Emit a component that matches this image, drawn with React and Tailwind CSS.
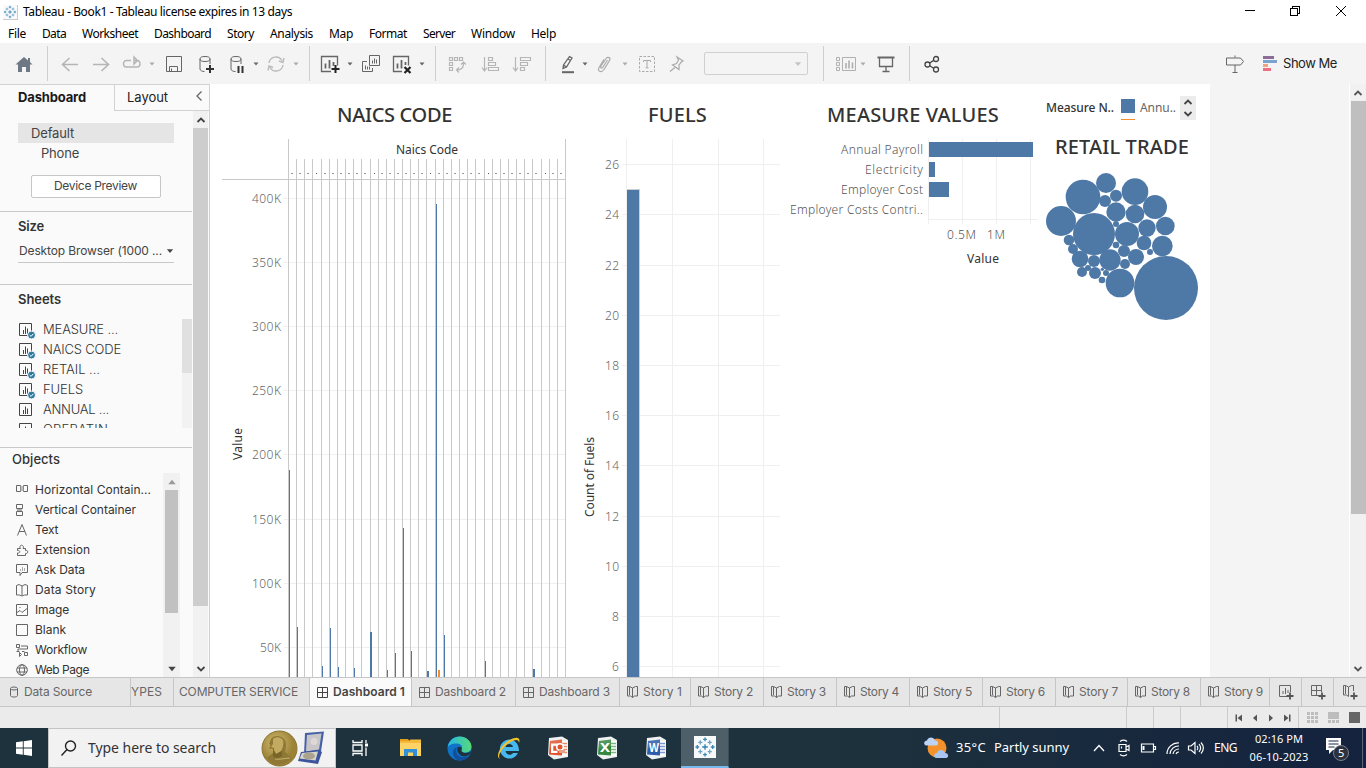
import React, { useLayoutEffect, useRef, useState } from "react";

const UI = "font-['Noto_Sans',sans-serif]";

/* Text run tracked so that it fills a given width. */
function Fit({ w, className = "", children }) {
  const ref = useRef(null);
  const [ls, setLs] = useState(0);
  useLayoutEffect(() => {
    const natural = ref.current.getBoundingClientRect().width;
    setLs((w - natural) / String(children).length);
  }, []);
  return (
    <span ref={ref} className={`inline-block shrink-0 whitespace-nowrap ${className}`} style={{ letterSpacing: ls }}>
      {children}
    </span>
  );
}

function Ico({ w = 20, h = 20, className = "", children, ...rest }) {
  return (
    <svg width={w} height={h} viewBox={`0 0 ${w} ${h}`} fill="none" stroke="currentColor" className={`shrink-0 ${className}`} {...rest}>
      {children}
    </svg>
  );
}

const Caret = ({ className = "" }) => (
  <Ico w={8} h={8} className={className}><path d="M1.5 2.5h5L4 5.5z" fill="currentColor" stroke="none" /></Ico>
);
const Sep = ({ className = "" }) => <div className={`h-[35px] w-px shrink-0 bg-[#cfcfcf] ${className}`} />;

function TableauMark({ size, className = "" }) {
  const plus = (x, y, r, c, k) => <path key={k} d={`M${x - r} ${y}h${2 * r}M${x} ${y - r}v${2 * r}`} stroke={c} />;
  return (
    <svg width={size} height={size} viewBox="0 0 22 22" className={className} strokeWidth="1.300">
      <rect width="22" height="22" fill="#f7f9fa" />
      {plus(11, 11, 2.8, "#2f7fb0", 0)}
      {[[11, 3.3], [11, 18.7], [3.3, 11], [18.7, 11]].map(([x, y], i) => plus(x, y, 1.9, "#3d87b5", i + 1))}
      {[[6.3, 6.3], [15.7, 6.3], [6.3, 15.7], [15.7, 15.7]].map(([x, y], i) => plus(x, y, 2.1, "#6aa5c8", i + 5))}
    </svg>
  );
}

function TitleBar() {
  return (
    <div className="flex h-6 items-center bg-white pl-[3px] text-black">
      <TableauMark size={15} className="border-r border-b border-[#ccc]" />
      <Fit w={269} className={`ml-[5px] text-xs leading-6 ${UI}`}>Tableau - Book1 - Tableau license expires in 13 days</Fit>
      <Ico w={12} h={12} className="ml-[952px]" shapeRendering="crispEdges"><path d="M1 4.500h10" /></Ico>
      <Ico w={12} h={12} className="ml-[33px]" shapeRendering="crispEdges"><path d="M1.5 2.5h7v7h-7zM3.5 2V.5h7v7H9" /></Ico>
      <Ico w={12} h={12} className="ml-[34px]"><path d="M1 0l10 10M11 0L1 10" /></Ico>
    </div>
  );
}

const MENU = [
  ["File", 18, "ml-2"], ["Data", 24, "ml-4"], ["Worksheet", 56, "ml-4"], ["Dashboard", 57, "ml-4"],
  ["Story", 27, "ml-4"], ["Analysis", 43, "ml-4"], ["Map", 24, "ml-4"], ["Format", 38, "ml-4"],
  ["Server", 32, "ml-4"], ["Window", 44, "ml-4"], ["Help", 25, "ml-4"],
];
function MenuBar() {
  return (
    <div className={`flex h-[19px] bg-white text-xs leading-[19px] text-black ${UI}`}>
      {MENU.map(([t, w, ml]) => <Fit key={t} w={w} className={ml}>{t}</Fit>)}
    </div>
  );
}

const Cylinder = ({ children, className }) => (
  <Ico className={className}>
    <ellipse cx="9" cy="5" rx="5" ry="2.500" /><path d="M4 5v10c0 1.500 2 2.500 4.500 2.500M14 5v5" />{children}
  </Ico>
);

function Toolbar() {
  return (
    <div className="flex h-[41px] items-center bg-[#f4f4f4] text-[#666]">
      <Ico className="ml-3.5"><path d="M10 3L1.500 10.500H4V18h4v-5h4v5h4v-7.500h2.500L16 8V4h-2v2.500z" fill="#6e7784" stroke="none" /></Ico>
      <Sep className="ml-[13px]" />
      <Ico className="ml-3 text-[#b5b5b5]" strokeWidth="1.6"><path d="M18 10.500H2.500M9.500 4L2.500 10.500L9.500 17" /></Ico>
      <Ico className="ml-[11px] text-[#b5b5b5]" strokeWidth="1.6"><path d="M2 10.500h15.500M10.500 4l7 6.500l-7 6.500" /></Ico>
      <Ico className="ml-[11px] text-[#b5b5b5]" strokeWidth="1.4"><path d="M9 6.500H4.500a3 3.200 0 0 0 0 6.500H15a3 3.200 0 0 0 3-3.200C18 7.500 17 6.500 15 6.500h-3M12 3v7l3.500-3.500z" /></Ico>
      <Caret className="ml-1.5 text-[#aaa]" />
      <Ico className="ml-2"><path d="M2.500 2.500h15v15h-15zM5.500 17v-4.500h8V17M7.500 14.500v2.500" /></Ico>
      <Cylinder className="ml-3"><path d="M14 11v8M10 15h8" stroke="#333" strokeWidth="2" /></Cylinder>
      <Cylinder className="ml-[11px]"><path d="M11.500 12v7M15.500 12v7" stroke="#333" strokeWidth="2" /></Cylinder>
      <Caret className="ml-[5px]" />
      <Ico className="ml-1.5 text-[#bbb]" strokeWidth="1.4"><path d="M3 9a7 7 0 0 1 13-2.500M17 11a7 7 0 0 1-13 2.500M18 4l-1 4.500l-4-1.500M2 16.500l1-4.500l4 1.500" /></Ico>
      <Caret className="ml-1.5 text-[#aaa]" />
      <Sep className="ml-[9px]" />
      <Ico className="ml-2.5"><path d="M11 17.500H1.500v-15h16v9" strokeWidth="1.3" /><path d="M5.500 9.500v5M9.500 6v8.500M13.500 8v4" strokeWidth="1.8" /><path d="M15.500 11v8M11.500 15h8" stroke="#222" strokeWidth="2" /></Ico>
      <Caret className="ml-1.5" />
      <Ico className="ml-[7px]"><path d="M8.500 1.500h10v10h-10zM6 7.500H1.500v10h10V14M11.500 6.500v3M13.500 4.500v5M15.500 5.500v4M4.500 11.500v4M6.500 12.500v3M8.500 12.500v3" /></Ico>
      <Ico className="ml-[11px]"><path d="M10 17.500H1.500v-15h15v9" strokeWidth="1.3" /><path d="M5.500 9.500v5M9.500 6v8.500M13.500 8v3" strokeWidth="1.8" /><path d="M12.500 13l6 6M18.500 13l-6 6" stroke="#222" strokeWidth="2.200" /></Ico>
      <Caret className="ml-1.5" />
      <Sep className="ml-[9px]" />
      <Ico className="ml-[11px] text-[#b5b5b5]"><path d="M2.500 3.500h3v3h-3zM7.500 3.500h3v3h-3zM12.500 3.500h3v3h-3zM2.500 8.500h3v3h-3zM2.500 13.500h3v3h-3zM16.500 8v2c0 4-3 6-7 6M14 10.500l2.500-2.500l2.500 2.500M12 13.500L9.500 16l2.500 2.500" strokeWidth="1.2" /></Ico>
      <Ico className="ml-[13px] text-[#b5b5b5]"><path d="M4.500 3v14M2 13.500l2.500 3.500l2.500-3.500M8.500 3.500h4v3h-4zM8.500 8.500h7v3h-7zM8.500 13.500h10v3h-10z" strokeWidth="1.2" /></Ico>
      <Ico className="ml-3 text-[#b5b5b5]"><path d="M3.500 3v14M1 13.500l2.500 3.500l2.500-3.500M8.500 3.500h10v3h-10zM8.500 8.500h7v3h-7zM8.500 13.500h4v3h-4z" strokeWidth="1.2" /></Ico>
      <Sep className="ml-[13px]" />
      <Ico className="ml-3"><path d="M5 14.500l.5-3.500L11.500 2.500l2.500 1.500L8.500 13zM5.500 11l3 2M10 5l2.500 1.500" strokeWidth="1.3" /><path d="M4 18.200h12" strokeWidth="2" /></Ico>
      <Caret className="ml-[3px]" />
      <Ico className="ml-1.5 text-[#aaa]" strokeWidth="1.2"><path d="M12.500 6L8 13c-1 2-3 1-2.200-.8L11 4.500c2-2.500 5-.5 3.500 2L9 15.500c-3 4-7 1.500-5-2L9 5.500" /></Ico>
      <Caret className="ml-1.5 text-[#aaa]" />
      <Ico className="ml-2 text-[#aaa]"><path d="M2.500 2.500h15v15h-15z" strokeDasharray="2.500 1.500" /><path d="M6.500 8V6.500h7V8M10 6.500v7M8.500 13.800h3" /></Ico>
      <Ico className="ml-2.5 text-[#aaa]" strokeWidth="1.2"><path d="M10 3l6 4l-1.500.8l-2.500 3.200v4.500L5.500 11l4-1.500L11.500 6zM8.500 13L3 17.500" /></Ico>
      <div className="ml-[17px] flex h-[23px] w-[104px] shrink-0 items-center justify-end rounded-[2px] border border-[#d0d0d0] pr-[5px] text-[#c4c4c4]"><Caret className="scale-125" /></div>
      <Sep className="ml-[15px]" />
      <Ico className="ml-3 text-[#b0b0b0]"><path d="M.5 3.500h3v3h-3zM.5 8.500h3v3h-3zM.5 13.500h3v3h-3zM6.500 3.500h13v13h-13z" /><path d="M10 9v5.500M13 6.500v8M16.500 8.500v6" strokeWidth="1.6" /></Ico>
      <Caret className="ml-[3px] text-[#aaa]" />
      <Ico className="ml-[9px]"><path d="M1.500 3.500h17" strokeWidth="2" /><path d="M3.500 4v8.500h13V4M10 12.500v5M6.500 17.500h7" strokeWidth="1.3" /></Ico>
      <Sep className="ml-[13px]" />
      <Ico className="ml-3 text-[#444]" strokeWidth="1.3"><circle cx="5.500" cy="10.500" r="2.500" /><circle cx="14" cy="5" r="2.500" /><circle cx="14" cy="15.500" r="2.500" /><path d="M7.700 9l4-2.600M7.700 11.800l4 2.400" /></Ico>
      <Ico className="ml-[283px]"><path d="M10 1.500v2M10 11v8M7.500 18.500h5M1.500 4h14l3 3.500l-3 3.500h-14z" /></Ico>
      <Ico className="ml-4" stroke="none"><path d="M2 2h11v3H2z" fill="#8a6e98" /><path d="M2 6h14v3H2z" fill="#7ba3d0" /><path d="M2 10h5v3H2z" fill="#f0a582" /><path d="M2 14h8v3H2z" fill="#ee6f80" /></Ico>
      <Fit w={54} className="ml-0.5 font-['Inter',sans-serif] text-[13px] text-[#222]">Show Me</Fit>
    </div>
  );
}

const SheetIcon = ({ check }) => (
  <Ico w={18} h={17}>
    <path d="M1.500 1.500h12v12h-12zM5.500 8v4M7.500 4.500v7.500M9.500 6.500v5.500" />
    {check && <g><circle cx="13.500" cy="13" r="4" fill="#2f7a9e" stroke="#fafafa" /><path d="M11.700 13l1.400 1.400l2.200-2.600" stroke="#fff" /></g>}
  </Ico>
);
const SHEETS = [["MEASURE ...", 75, 1], ["NAICS CODE", 78, 1], ["RETAIL ...", 57, 1], ["FUELS", 40, 1], ["ANNUAL ...", 66, 0], ["OPERATIN", 65, 0]];

const BOOK = "M3.500 1.500h-2v9.500h3l2 1.500l2-1.500h3V1.500h-2M6.500 12.500v-9.500l-3-1.500v8.500M6.500 3l3-1.500";
const OPEN_BOOK = "M.5 2.500l2.500-1l3 1.500l3-1.500l2.500 1v9.500h-3l-2.500 1l-2.500-1h-3zM6 3v9.500";
const OBJECTS = [
  ["Horizontal Contain...", 116, <><path d="M.5 2.500h4v6h-4zM7.500 2.500h4v6h-4z" /><path d="M4.500 3h3v5h-3z" fill="#bbb" stroke="none" /></>],
  ["Vertical Container", 101, <><path d="M.5 1.500h6v4h-6zM.5 8.500h6v4h-6z" /><path d="M1 6h5v2H1z" fill="#aaa" stroke="none" /></>],
  ["Text", 23, <path d="M1.500 12.500L6 1.500l4.500 11M3 8.500h6" />],
  ["Extension", 55, <path d="M1.500 5.500h3c-1.500-2 .3-4 2-3c1.500 1 1 2.200.5 3h2.500v2c3-.8 3 3.500 0 3v2h-8v-2.500c3 .5 3-3 0-2.500z" />],
  ["Ask Data", 50, <><path d="M.5 1.500h11v8H6l-2 3v-3H.5z" /><path d="M4.500 6v2M6.500 4v4M8.500 5v3" stroke="#aaa" /></>],
  ["Data Story", 61, <path d={OPEN_BOOK} />],
  ["Image", 34, <path d="M.5 1.500h11v11H.5zM1 9.500l3-2l2 2l5-4M3.500 4.500h1" />],
  ["Blank", 31, <path d="M.5 1.500h11v11H.5z" />],
  ["Workflow", 52, <path d="M.5 1.500h3v3h-3zM5 3h6.500v3H2v2.500M.5 8.500h3M6 8.500h2.500M8.500 9.500h3v3h-3zM3.500 9.500v4l2-2z" />],
  ["Web Page", 54, <><circle cx="6" cy="7" r="5.300" /><ellipse cx="6" cy="7" rx="2.500" ry="5.300" /><path d="M1 5h10M1 9h10" /></>],
];

const Chevron = ({ up, className = "" }) => (
  <Ico w={10} h={8} strokeWidth="1.800" className={className}><path d={up ? "M1.500 6L5 2.500L8.500 6" : "M1.500 2L5 5.500L8.500 2"} /></Ico>
);

function Sidebar() {
  return (
    <div className="flex w-[210px] shrink-0 flex-col border-t border-r border-[#d2d2d2] bg-[#fafafa] font-['Inter',sans-serif] text-[#444]">
      <div className="flex h-[26px] shrink-0">
        <div className="w-[114px] pl-[18px] text-[13px] leading-[25px] font-bold text-[#1a1a1a]"><Fit w={68}>Dashboard</Fit></div>
        <div className="flex flex-1 items-center border-b border-l border-[#d2d2d2] pl-3 text-[13px] leading-[25px] text-[#222]">
          <Fit w={41}>Layout</Fit>
          <Ico w={8} h={12} className="mb-1 ml-[27px] text-[#666]" strokeWidth="1.3"><path d="M6.500 1.500L2 6l4.500 4.500" /></Ico>
        </div>
      </div>
      <div className="flex min-h-0 flex-1">
        <div className="flex w-[193px] shrink-0 flex-col pr-px">
          <div className="h-[101px] shrink-0 border-b border-[#c8c8c8] pt-3">
            <div className="ml-[18px] h-5 w-[156px] bg-[#e5e5e5] pl-[13px] text-[13px] leading-5"><Fit w={43}>Default</Fit></div>
            <div className="h-5 pl-[41px] text-[13px] leading-5"><Fit w={38}>Phone</Fit></div>
            <div className="mt-3 ml-[31px] h-[23px] w-[130px] rounded-[2px] border border-[#c6c6c6] bg-white pl-[22px] text-xs leading-[20px]"><Fit w={83}>Device Preview</Fit></div>
          </div>
          <div className="h-[73px] shrink-0 border-b border-[#c8c8c8] pt-1 pl-[18px]">
            <div className="text-[13px] leading-5 font-semibold text-[#333]"><Fit w={26}>Size</Fit></div>
            <div className="mt-[5px] flex h-[22px] w-[156px] items-center border-b border-[#c8c8c8] pb-[2px] pl-px text-xs"><Fit w={143}>Desktop Browser (1000 ...</Fit><Caret className="ml-1 scale-125" /></div>
          </div>
          <div className="flex h-[163px] shrink-0 flex-col border-b border-[#c8c8c8] pt-1 pl-[18px]">
            <div className="text-[13px] leading-5 font-semibold text-[#333]"><Fit w={43}>Sheets</Fit></div>
            <div className="mt-[10px] flex h-[109px] overflow-hidden">
              <div className="w-[164px]">
                {SHEETS.map(([t, w, c]) => (
                  <div key={t} className="flex h-5 items-center pt-0.5 text-[13px]"><SheetIcon check={c} /><Fit w={w} className="ml-[7px] font-light text-[#333]">{t}</Fit></div>
                ))}
              </div>
              <div className="w-2.5 bg-[#f2f2f2]"><div className="h-[54px] bg-[#e0e0e0]" /></div>
            </div>
          </div>
          <div className="flex min-h-0 flex-1 flex-col pl-3">
            <div className="pt-px text-[13px] leading-5 font-medium text-[#333]"><Fit w={48}>Objects</Fit></div>
            <div className="mt-1 flex min-h-0 flex-1">
              <div className="h-full w-[151px] overflow-hidden pt-[7px] pl-1">
                {OBJECTS.map(([t, w, icon]) => (
                  <div key={t} className="flex h-5 items-center text-xs text-[#333]"><Ico w={13} h={14} className="text-[#666]">{icon}</Ico><Fit w={w} className="ml-1.5">{t}</Fit></div>
                ))}
              </div>
              <div className="flex w-[17px] flex-col items-center justify-between bg-[#f1f1f1]">
                <div className="flex flex-col items-center"><Caret className="mt-[5px] mb-1 scale-150 rotate-180 text-[#999]" /><div className="h-[123px] w-[13px] bg-[#c1c1c1]" /></div>
                <Caret className="mb-1 scale-150 text-[#444]" />
              </div>
            </div>
          </div>
        </div>
        <div className="flex w-[15px] shrink-0 flex-col items-center justify-between bg-[#f1f1f1]">
          <div className="flex flex-col items-center"><Chevron up className="mt-[5px] mb-1" /><div className="h-[478px] w-[15px] bg-[#cdcdcd]" /></div>
          <Chevron className="mb-1" />
        </div>
      </div>
    </div>
  );
}

const Heading = ({ w, className, children }) => (
  <div className={`h-8 text-[20px] leading-8 font-medium text-[#333] ${UI} ${className}`}><Fit w={w}>{children}</Fit></div>
);

const RULES = [76, 84, 92, 100, 109, 117, 125, 133, 141, 149, 158, 166, 174, 182, 190, 198, 206, 214, 223, 231, 239, 247, 255, 263, 272, 280, 288, 296, 304, 312, 320, 329, 337, 345, 353];
const NAICS_TICKS = [[198, "400K"], [262, "350K"], [326, "300K"], [390, "250K"], [454, "200K"], [519, "150K"], [583, "100K"], [647, "50K"]];
const NAICS_BARS = [[289, 470, 1], [297, 627, 1], [322, 666, 1], [330, 628, 1], [338, 667, 1], [354, 668, 1], [370, 632, 2], [387, 670, 1], [395, 653, 1], [403, 528, 1], [411, 651, 1], [427, 671, 2], [436, 204, 1], [438, 670, 2, "#f28e2b"], [444, 635, 1], [485, 661, 1], [533, 669, 2]];

function NaicsChart() {
  return (
    <svg width="360" height="545" viewBox="210 132 360 545" className={`block ${UI}`}>
      <g shapeRendering="crispEdges">
        {NAICS_TICKS.map(([y]) => <rect key={y} x="284" y={y} width="282" height="1" fill="#efefef" />)}
        {RULES.map((x, i) => {
          const top = i === 0 || i === RULES.length - 1 ? 139 : 159;
          return <rect key={x} x={212 + x} y={top} width="1" height={677 - top} fill="#c9c9c9" />;
        })}
        {RULES.slice(0, -1).map((x, i) => <rect key={x} x={212 + x + (i % 7 === 3 ? 4 : 3)} y="173" width={i % 7 === 3 ? 1 : 2} height="1" fill={i % 7 === 3 ? "#555" : "#999"} />)}
        <rect x="222" y="179" width="344" height="1" fill="#c9c9c9" />
        {NAICS_BARS.map(([x, y, w, c]) => <rect key={x} x={x} y={y} width={w} height={677 - y} fill={c || "#4e79a7"} />)}
      </g>
      <text x="396" y="154" fontSize="12" textLength="62" fill="#333">Naics Code</text>
      {NAICS_TICKS.map(([y, t]) => <text key={t} x={t === "50K" ? 260 : 252} y={y + 5} fontSize="12" fontWeight="300" textLength={t === "50K" ? 21 : 29} fill="#666">{t}</text>)}
      <text transform="translate(242 460) rotate(-90)" fontSize="12" textLength="32" fill="#333">Value</text>
    </svg>
  );
}

const FUEL_TICKS = [[164, 26], [214, 24], [265, 22], [315, 20], [365, 18], [415, 16], [465, 14], [516, 12], [566, 10], [616, 8], [666, 6]];
function FuelsChart() {
  return (
    <svg width="210" height="545" viewBox="575 132 210 545" className={`block ${UI}`}>
      <g shapeRendering="crispEdges">
        {FUEL_TICKS.map(([y]) => <rect key={y} x="622" y={y} width="158" height="1" fill="#efefef" />)}
        {[626, 672, 718, 763].map((x) => <rect key={x} x={x} y="139" width="1" height="538" fill="#efefef" />)}
        <rect x="627" y="189" width="13" height="488" fill="#cfcfcf" />
        <rect x="627" y="190" width="12" height="487" fill="#4e79a7" />
      </g>
      {FUEL_TICKS.map(([y, t]) => <text key={t} x={t > 9 ? 605 : 612} y={y + 5} fontSize="12" fontWeight="300" textLength={t > 9 ? 14 : 7} fill="#666">{t}</text>)}
      <text transform="translate(594 517) rotate(-90)" fontSize="12" textLength="80" fill="#333">Count of Fuels</text>
    </svg>
  );
}

function MeasureChart() {
  return (
    <svg width="255" height="145" viewBox="785 132 255 145" className={`block ${UI}`} fontSize="12" fontWeight="300" fill="#555">
      <g shapeRendering="crispEdges">
        {[928, 962, 996, 1030].map((x) => <rect key={x} x={x} y="139" width="1" height="85" fill="#efefef" />)}
        <rect x="929" y="219" width="109" height="1" fill="#efefef" />
        <path d="M929 142h104v15h-104zM929 162h6v15h-6zM929 182h20v15h-20z" fill="#4e79a7" />
      </g>
      <text x="841" y="154" textLength="82">Annual Payroll</text>
      <text x="865" y="174" textLength="58">Electricity</text>
      <text x="841" y="194" textLength="82">Employer Cost</text>
      <text x="790" y="214" textLength="133">Employer Costs Contri..</text>
      <text x="947" y="239" textLength="29">0.5M</text>
      <text x="987" y="239" textLength="18">1M</text>
      <text x="967" y="263" textLength="32" fill="#333" fontWeight="400">Value</text>
    </svg>
  );
}

const BUBBLES = [[909, 339, 52], [978, 297, 30], [1065, 323, 40], [1008, 335, 18], [975, 351, 18], [1125, 369, 36], [1008, 384, 29], [1065, 390, 28], [843, 411, 45], [942, 450, 63], [1008, 420, 9], [1041, 450, 36], [1101, 432, 26], [1156, 426, 28], [867, 468, 16], [1092, 477, 22], [1147, 486, 31], [1008, 483, 10], [879, 495, 15], [1032, 501, 18], [1110, 504, 9], [900, 525, 25], [942, 531, 18], [990, 528, 32], [1068, 519, 24], [1035, 540, 15], [924, 552, 9], [906, 564, 15], [945, 567, 18], [967, 556, 5], [978, 567, 9], [966, 588, 10], [1020, 597, 43], [1158, 612, 96]];

function Canvas() {
  return (
    <div className="flex min-w-0 flex-1 bg-[#f4f4f4]">
      <div className="flex w-[1000px] shrink-0 bg-white">
        <div className="w-[365px] shrink-0 pt-[15px]"><Heading w={115} className="mb-px pl-[127px]">NAICS CODE</Heading><NaicsChart /></div>
        <div className="w-[210px] shrink-0 pt-[15px]"><Heading w={59} className="mb-px pl-[73px]">FUELS</Heading><FuelsChart /></div>
        <div className="w-[255px] shrink-0 pt-[15px]"><Heading w={172} className="mb-px pl-[42px]">MEASURE VALUES</Heading><MeasureChart /></div>
        <div className="w-[170px] shrink-0 pt-3">
          <div className={`flex h-6 items-center pl-1.5 text-xs text-[#666] ${UI}`}>
            <Fit w={68} className="pb-px leading-[23px] font-medium text-[#333]">Measure N..</Fit>
            <div className="ml-[7px] flex h-6 w-3.5 flex-col pt-[3px]"><div className="h-3.5 bg-[#4e79a7]" /><div className="mt-1.5 h-px bg-[#f28e2b]" /></div>
            <Fit w={36} className="ml-[5px] pb-px leading-[23px]">Annu..</Fit>
            <div className="ml-1 flex h-6 w-4 flex-col items-center justify-between bg-[#ececec] py-0.5 text-[#444]"><Chevron up /><Chevron /></div>
          </div>
          <Heading w={134} className="mt-[11px] pl-[15px]">RETAIL TRADE</Heading>
          <svg width="160" height="160" viewBox="786 255 480 480" className="mt-[6px] ml-[2px] block" fill="#4e79a7">
            {BUBBLES.map(([x, y, r]) => <circle key={`${x}-${y}`} cx={x} cy={y} r={r} />)}
          </svg>
        </div>
      </div>
      <div className="flex-1" />
      <div className="flex w-[17px] shrink-0 flex-col items-center justify-between border-l border-white bg-[#f1f1f1] text-[#555]">
        <div className="flex flex-col items-center"><Chevron up className="mt-[5px] mb-1" /><div className="h-[413px] w-[15px] bg-[#bfbfbf]" /></div>
        <Chevron className="mb-1" />
      </div>
    </div>
  );
}

const GRID = "M1.500 1.500h10v10h-10zM6.500 1.500v10M1.500 6.500h10";
const DASH_TABS = [["Dashboard 1", 72, "w-[102px]", 1], ["Dashboard 2", 71, "w-[104px]"], ["Dashboard 3", 71, "w-[104px]"]];
const STORY_TABS = ["w-[71px]", "w-[73px]", "w-[73px]", "w-[73px]", "w-[73px]", "w-[73px]", "w-[72px]", "w-[73px]", "w-[69px]"];
const tab = "flex h-full shrink-0 items-center border-r border-[#c6c6c6]";

function TabStrip() {
  return (
    <div className="flex h-[30px] shrink-0 items-center border-y border-[#c6c6c6] bg-[#e6e6e6] font-['Inter',sans-serif] text-xs text-[#666]">
      <div className={`${tab} w-[131px] pl-[9px]`}><Ico w={10} h={14}><ellipse cx="5" cy="3.500" rx="3.500" ry="1.500" /><path d="M1.500 3.500v7c0 2 7 2 7 0v-7" /></Ico><Fit w={68} className="ml-[5px]">Data Source</Fit></div>
      <div className={`${tab} w-[43px]`}><Fit w={31}>YPES</Fit></div>
      <div className={`${tab} w-[136px] pl-[5px]`}><Fit w={119}>COMPUTER SERVICE</Fit></div>
      {DASH_TABS.map(([t, w, cw, on]) => (
        <div key={t} className={`${tab} ${cw} pl-1.5 ${on ? "bg-[#fafafa] font-semibold text-[#444]" : ""}`}><Ico w={13} h={13}><path d={GRID} /></Ico><Fit w={w} className="ml-[4px]">{t}</Fit></div>
      ))}
      {STORY_TABS.map((cw, i) => (
        <div key={i} className={`${tab} ${cw} pl-1.5`}><Ico w={13} h={14}><path d={BOOK} /></Ico><Fit w={39} className="ml-[4px]">{`Story ${i + 1}`}</Fit></div>
      ))}
      <div className={`${tab} w-8 justify-center`}><Ico w={16} h={16}><path d="M9 12.500H1.500v-11h11V8M5 7v3M7.500 4v6M10 6v3" /><path d="M12 8.500v7M8.500 12h7" stroke="#555" strokeWidth="1.800" /></Ico></div>
      <div className={`${tab} w-8 justify-center`}><Ico w={16} h={16}><path d="M9 11.500H1.500v-10h10V8M6.500 1.500v10M1.500 6.500h10" /><path d="M12 8.500v7M8.500 12h7" stroke="#555" strokeWidth="1.800" /></Ico></div>
      <div className="flex flex-1 justify-center"><Ico w={16} h={16}><path d="M3.500 1.500h-2v9.500h3l2 1.500v-9.500l-3-1.500v8.500M6.500 3l3-1.500h2V7" /><path d="M12 8.500v7M8.500 12h7" stroke="#555" strokeWidth="1.800" /></Ico></div>
    </div>
  );
}

function StatusBar() {
  return (
    <div className="flex h-[21px] shrink-0 items-center justify-end bg-[#ebebeb] text-[#555]">
      {["w-[127px]", "w-[27px]", "w-[27px]", "w-[47px]"].map((c, i) => <div key={i} className={`h-full border-l border-[#cbcbcb] ${c}`} />)}
      <div className="flex h-full w-[71px] items-center gap-[6px] border-l border-[#cbcbcb] pl-1.5">
        <Ico w={10} h={10} fill="currentColor" stroke="none"><path d="M1.500 1.500H3v7H1.500zM8 1.500v7L3.500 5z" /></Ico>
        <Ico w={10} h={10} fill="currentColor" stroke="none"><path d="M7 1.500v7L3 5z" /></Ico>
        <Ico w={10} h={10} fill="currentColor" stroke="none"><path d="M3 1.500v7L7 5z" /></Ico>
        <Ico w={10} h={10} fill="currentColor" stroke="none"><path d="M7 1.500h1.500v7H7zM2 1.500v7L6.500 5z" /></Ico>
      </div>
      <div className="flex h-full w-[68px] items-center gap-[10px] border-l border-[#cbcbcb] pl-2">
        <Ico w={11} h={11} fill="#bdbdbd" stroke="none"><path d="M0 0h3v3H0zM4 0h3v3H4zM8 0h3v3H8zM0 4h3v3H0zM4 4h3v3H4zM8 4h3v3H8zM0 8h3v3H0zM4 8h3v3H4zM8 8h3v3H8z" /></Ico>
        <Ico w={11} h={11} fill="#bdbdbd" stroke="none"><path d="M0 0h11v7H0zM0 8h3v3H0zM4 8h3v3H4zM8 8h3v3H8z" /></Ico>
        <div className="size-[11px] bg-[#666]" />
      </div>
    </div>
  );
}

const P_MARK = <><path d="M5 7.500h6.500v2.300H7.300v5h4.200v2.300H5z" fill="#fff" /><circle cx="14" cy="11" r="3.300" fill="#e1532c" stroke="#fff" strokeWidth="1.600" /><path d="M13 14h6v3h-6z" fill="#e9a188" /></>;
function Office({ a, b, glyph }) {
  return (
    <Ico w={24} h={24} stroke="none">
      <path d="M3 2l13-1.500l6 3.500v17l-14 2.500L2 19z" fill="#eef1f2" />
      <path d="M15 5h6v15h-6z" fill="#fff" /><path d="M16 7.500h5M16 10.500h5M16 13.500h5M16 16.500h5" stroke={b} strokeWidth="1.600" />
      <path d="M4 5l12-1.500v16L3 18.500z" fill={a} /><path d="M4 5l12-1.500v6L4 12z" fill="#fff" opacity=".15" />
      {glyph === "P" ? P_MARK : <text x="5" y="16" fontSize="12" fontWeight="700" fill="#fff" textLength="10" lengthAdjust="spacingAndGlyphs" className={UI}>{glyph}</text>}
    </Ico>
  );
}

function Taskbar() {
  return (
    <div className={`flex h-10 shrink-0 items-center bg-linear-to-r from-[#1e323d] from-60% to-[#14223e] text-white ${UI}`}>
      <div className="flex w-12 justify-center"><Ico w={16} h={16} fill="#fff" stroke="none"><path d="M0 2.300L6.800 1.300V7.500H0zM7.700 1.200L16 0v7.500H7.700zM0 8.400h6.800v6.300L0 13.700zM7.700 8.400H16V16l-8.300-1.200z" /></Ico></div>
      <div className="flex h-full w-72 shrink-0 items-center border border-[#c5c5c5] bg-[#f2f2f2] pl-[11px] text-[#333]">
        <Ico w={18} h={18} stroke="#222" strokeWidth="1.400"><circle cx="10.500" cy="7" r="5" /><path d="M7 10.500L1.500 16.500" /></Ico>
        <Fit w={128} className="ml-[10px] text-sm leading-5">Type here to search</Fit>
        <Ico w={37} h={37} className="ml-[45px]" stroke="none">
          <defs><radialGradient id="gold" cx=".4" cy=".35"><stop stopColor="#d2bd70" /><stop offset="1" stopColor="#9b8237" /></radialGradient></defs>
          <circle cx="18.500" cy="18.500" r="17.500" fill="url(#gold)" stroke="#8c7532" />
          <path d="M10 9c2-4 10-4 13 0c3 3 2 9 1 13l7 6c-5 8-20 9-25 0l6-5v-4l-4-.5l1.500-3.500l-1.500-1z" fill="#8f7836" />
          <path d="M12 9c3-3 8-2 10 1c1 3 0 8-2 11l-5 3l-2-2v-4l-3-1l2-3z" fill="#c2ab60" /><path d="M12 18l3 6l6-3v5l-6 3l-3-3z" fill="#7a6529" /><path d="M14 29c5 1 10-1 15-1" stroke="#c9b36a" />
        </Ico>
        <Ico w={30} h={37} className="-ml-px" stroke="none">
          <path d="M8 3l19-1.500-3 20-17 2.500z" fill="#4663a8" /><path d="M10 5l14.500-1.500-2.500 16-13 2z" fill="#c9c6c9" />
          <path d="M4 22l18-2 3 2-4 12-20-3z" fill="#3c559c" /><path d="M5 23l16-1.500-2.500 9-16-2z" fill="#d8d4cc" /><ellipse cx="12" cy="26" rx="6" ry="3.500" fill="#aaa28c" /><circle cx="17" cy="11.500" r="3.500" fill="#ddd8d5" />
        </Ico>
      </div>
      <div className="flex w-[345px] items-center">
        <Ico w={18} h={18} className="ml-[15px]" strokeWidth="1.300"><path d="M2 1v2.500h9V1M2 6h9v6H2zM2 17v-2.500h9V17M15 1v3M15 8.500V17" /><path d="M14 4.500h3v3h-3z" fill="#fff" stroke="none" /></Ico>
        <Ico w={24} h={24} className="ml-[30px]" stroke="none"><path d="M1 3h8l2 2.500H1z" fill="#e59f1c" /><path d="M1 5.500h21V20H1z" fill="#fcd364" /><path d="M1 5h9l1.500-1.500H22V7H1z" fill="#f5ba3b" /><path d="M5 20v-7h13v7h-4v-3.500H9V20z" fill="#3190d6" /></Ico>
        <Ico w={25} h={25} className="ml-6" stroke="none">
          <defs><linearGradient id="edge" x1="0" x2="1"><stop stopColor="#26b8e8" /><stop offset="1" stopColor="#58d977" /></linearGradient></defs>
          <circle cx="12.500" cy="12.500" r="12" fill="#1173c6" />
          <path d="M.6 11.500C2 4 7 .5 12.500.5c7 0 12 5 12 10c0 4-3 6-6.500 6c-3 0-4-1-3.500-2.500c2-4-1-6.500-5-6.500c-5 0-8 2-8.900 4z" fill="url(#edge)" />
          <path d="M10 11c-3 6 2 13 12 9c-3 4-7 5-11 4.300C5 22 4 13 10 11z" fill="#124f9d" /><path d="M10.500 11.500c1.500-1.800 5-.5 4.200 1.800c-1 2 .5 3.700 4 3.700c2 0 4-.7 5.500-2c-1 5-7 7-11 4c-2.600-2-3.700-5-2.700-7.500z" fill="#1e323d" />
        </Ico>
        <Ico w={26} h={25} className="ml-6" stroke="none">
          <path d="M13 3.500A9.500 9.500 0 1 0 22 17h-5c-2 3-7 2-7.500-2H23C23 8 19 3.500 13 3.500zM9.500 11c.5-4 7-4 7.500 0z" fill="#48b9ef" />
          <path d="M4 23C-1 21 4 10 12 5c8-5 13-4 11 2c0-4-4-4-10 0C6 12 1 20 4 23z" fill="#f2c230" />
        </Ico>
        <div className="ml-6 flex gap-[25px]"><Office a="#e1532c" b="#e58b6e" glyph="P" /><Office a="#34873e" b="#79b87f" glyph="X" /><Office a="#2c5caa" b="#7899d3" glyph="W" /></div>
      </div>
      <div className="flex h-full w-12 shrink-0 items-center justify-center border-r border-[#3c4d57] border-b-2 border-b-[#76b9ed] bg-[#4d606a]"><TableauMark size={22} /></div>
      <div className="flex h-full flex-1 items-center justify-end">
        <Ico w={26} h={26} stroke="none"><circle cx="14" cy="13" r="9.500" fill="#f3922b" /><path d="M3 10.500c-3-1-2-5 1-5c1-4 7-4 8 0c4-.5 4 5 1 5z" fill="#bcd3f6" /><path d="M13 23c-3-1-2-5 1-5c1-4 7-4 8 0c4 0 4 5 1 5z" fill="#a9c6f3" /></Ico>
        <Fit w={30} className="ml-[7px] text-[13px]">35°C</Fit>
        <Fit w={75} className="ml-[8px] text-[13px]">Partly sunny</Fit>
        <Ico w={14} h={14} className="ml-[23px]" strokeWidth="1.300"><path d="M2 10l5-5.500L12 10" /></Ico>
        <Ico w={14} h={18} className="ml-[11px]" strokeWidth="1.200"><path d="M2 5.500h7v7H2zM9 8l3-1.500v5L9 10M3 2.500c2-1.500 5-1.500 7 0M3 15.500c2 1.500 5 1.500 7 0M4.500 7.500v2" /></Ico>
        <Ico w={18} h={14} className="ml-[8px]" strokeWidth="1.200"><path d="M2.500 3h12v8h-12zM14.500 5.500h2v3h-2" /><path d="M4.500 5v4" strokeWidth="2" /></Ico>
        <Ico w={16} h={16} className="ml-[8px]" strokeWidth="1.200"><path d="M2 14A11 11 0 0 1 14 3M5 14a8.500 8.500 0 0 1 9-8M8 14a6 6 0 0 1 6-5M11 14a3 3 0 0 1 3-2" /></Ico>
        <Ico w={18} h={16} className="ml-[6px]" strokeWidth="1.200"><path d="M1.500 6h2.500l4-3.500v11L4 10H1.500zM10 6c1 1 1 3 0 4M12 4c2 2.500 2 5.500 0 8M14 2.500c3 3.500 3 7.500 0 11" /></Ico>
        <Fit w={23} className="ml-[9px] text-xs">ENG</Fit>
        <div className="ml-[12px] flex w-[60px] flex-col items-center pb-px text-[11px] leading-[18px]"><Fit w={48}>02:16 PM</Fit><Fit w={59}>06-10-2023</Fit></div>
        <Ico w={26} h={28} className="ml-[15px]" stroke="none"><path d="M2 4h15v12H9l-4 4v-4H2z" fill="#fff" /><path d="M4.500 7h10M4.500 10h10M4.500 13h6" stroke="#17263d" /><circle cx="17" cy="19" r="7.500" fill="#2c323c" stroke="#7a8089" /><text x="14" y="23" fontSize="11" fill="#fff" className={UI}>5</text></Ico>
        <div className="mr-[3px] ml-[12px] h-full w-px bg-[#596477]" />
      </div>
    </div>
  );
}

export default function App() {
  return (
    <div className="flex h-[768px] w-[1366px] flex-col overflow-hidden bg-white">
      <TitleBar />
      <MenuBar />
      <Toolbar />
      <div className="flex h-[593px] shrink-0 overflow-hidden"><Sidebar /><Canvas /></div>
      <TabStrip />
      <StatusBar />
      <Taskbar />
    </div>
  );
}
